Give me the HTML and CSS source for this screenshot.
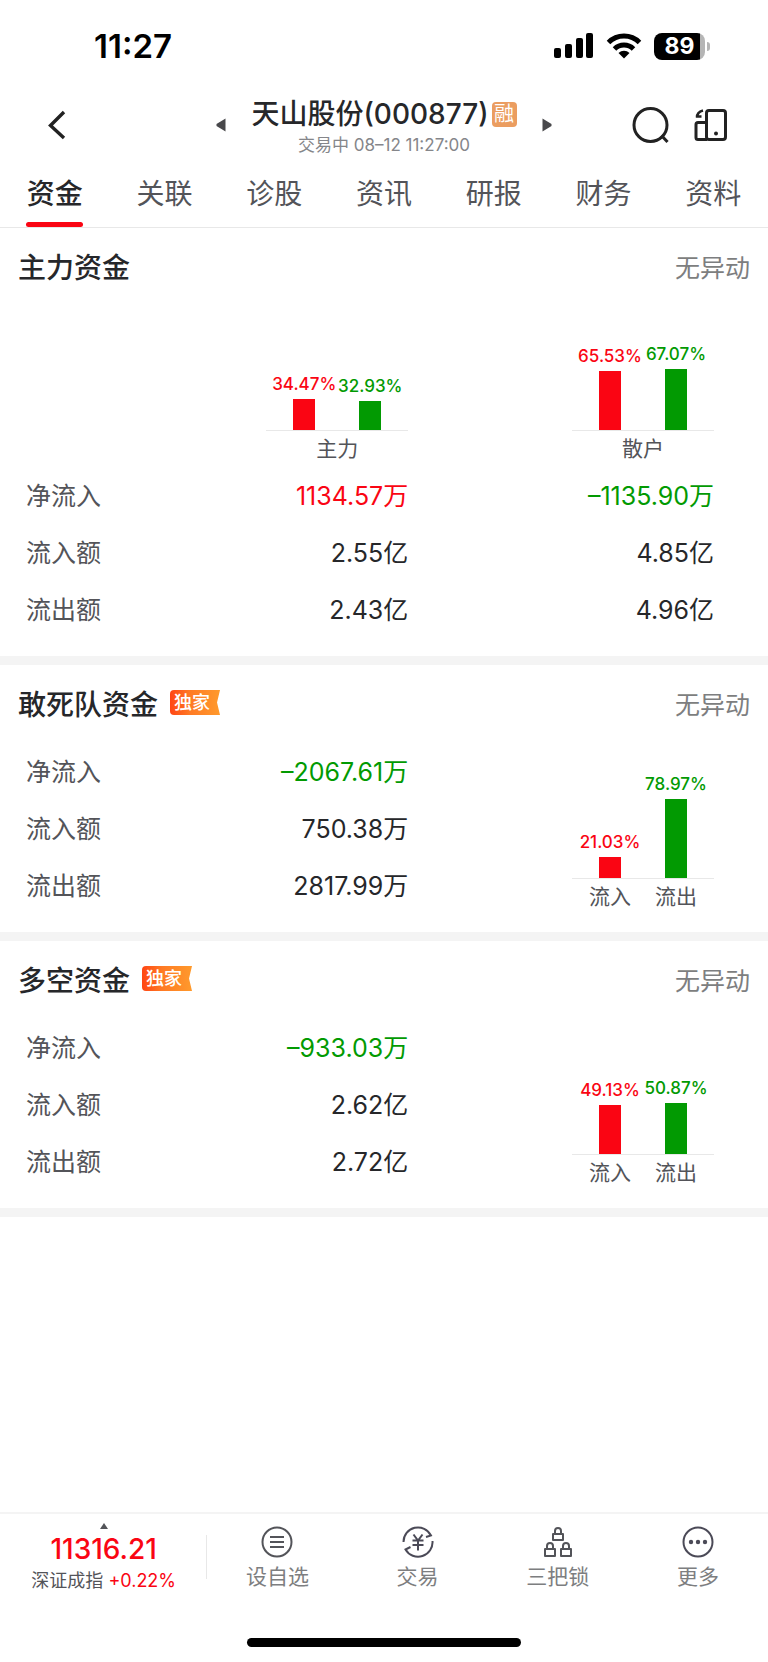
FILE: index.html
```html
<!DOCTYPE html>
<html lang="zh-CN">
<head>
    <meta charset="UTF-8">
    <meta name="viewport" content="width=device-width, initial-scale=1.0">
    <title>天山股份(000877)</title>
    <link rel="stylesheet" href="styles.css">
</head>

<body>
    <div class="status-bar">
        <span class="time">11:27</span>
        <div class="status-icons">
            <svg width="40" height="26" viewBox="0 0 40 26">
                <rect x="0" y="15" width="7" height="10" rx="2"/>
                <rect x="11" y="11" width="7" height="14" rx="2"/>
                <rect x="22" y="5" width="7" height="20" rx="2"/>
                <rect x="32" y="0" width="7" height="25" rx="2"/>
            </svg>
            <svg width="36" height="26" viewBox="0 0 36 26">
                <g fill="none" stroke="#000" stroke-width="5">
                    <path d="M2.5 9.5a22 22 0 0 1 31 0"/>
                    <path d="M8.5 16a13.5 13.5 0 0 1 19 0"/>
                </g>
                <path d="M18 25.5l-5.5-5.5a8 8 0 0 1 11 0z"/>
            </svg>
            <div class="battery">
                <span class="battery-level">89</span>
                <span class="battery-cap"></span>
            </div>
        </div>
    </div>

    <header class="header">
        <button class="icon-btn back" type="button" aria-label="返回">
            <svg width="20" height="32" viewBox="0 0 20 32" fill="none" stroke="#222" stroke-width="3.4">
                <path d="M18 3L4.500 16.500L18 29"/>
            </svg>
        </button>
        <div class="stock">
            <button class="icon-btn" type="button" aria-label="上一只">
                <svg width="10" height="14" viewBox="0 0 10 14" fill="#48484b">
                    <path d="M9.500 0.500v13L0.500 8V6z"/>
                </svg>
            </button>
            <div class="stock-info">
                <h1>天山股份(000877)<span class="margin-tag">融</span></h1>
                <p>交易中 08–12 11:27:00</p>
            </div>
            <button class="icon-btn" type="button" aria-label="下一只">
                <svg width="10" height="14" viewBox="0 0 10 14" fill="#48484b">
                    <path d="M0.500 0.500v13L9.500 8V6z"/>
                </svg>
            </button>
        </div>
        <div class="actions">
            <button class="icon-btn" type="button" aria-label="搜索">
                <svg width="38" height="38" viewBox="0 0 38 38" fill="none" stroke="#222" stroke-width="3">
                    <circle cx="18.500" cy="19" r="16.500"/>
                    <path d="M29.500 29.500l6 6.500"/>
                </svg>
            </button>
            <button class="icon-btn" type="button" aria-label="横屏">
                <svg width="34" height="36" viewBox="0 0 34 36" fill="none" stroke="#222" stroke-width="3">
                    <rect x="12.500" y="3.500" width="19" height="29" rx="2.500"/>
                    <path d="M12.500 15.500H4a2 2 0 0 0-2 2V30.500a2 2 0 0 0 2 2H13"/>
                    <path d="M3 10.500C3 6.500 5 4.500 9 3.500M2 9.500h5.500" stroke-width="2.600"/>
                    <circle cx="22" cy="26.500" r="2" fill="#222" stroke="none"/>
                </svg>
            </button>
        </div>
    </header>

    <nav class="tabs">
        <a class="tab active" href="#">资金</a>
        <a class="tab" href="#">关联</a>
        <a class="tab" href="#">诊股</a>
        <a class="tab" href="#">资讯</a>
        <a class="tab" href="#">研报</a>
        <a class="tab" href="#">财务</a>
        <a class="tab" href="#">资料</a>
    </nav>

    <main>
        <section class="card">
            <div class="card-head">
                <h2>主力资金</h2>
                <span class="note">无异动</span>
            </div>
            <div class="card-body">
                <table class="funds wide">
                    <thead>
                        <tr>
                            <td></td>
                            <th scope="col">
                                <div class="chart">
                                    <div class="bars">
                                        <div class="bar up">34.47%<i style="height: 31px"></i></div>
                                        <div class="bar down">32.93%<i style="height: 29px"></i></div>
                                    </div>
                                    <div class="chart-labels"><span>主力</span></div>
                                </div>
                            </th>
                            <th scope="col">
                                <div class="chart">
                                    <div class="bars">
                                        <div class="bar up">65.53%<i style="height: 59px"></i></div>
                                        <div class="bar down">67.07%<i style="height: 61px"></i></div>
                                    </div>
                                    <div class="chart-labels"><span>散户</span></div>
                                </div>
                            </th>
                        </tr>
                    </thead>
                    <tbody>
                        <tr>
                            <th scope="row">净流入</th>
                            <td class="up">1134.57万</td>
                            <td class="down">–1135.90万</td>
                        </tr>
                        <tr>
                            <th scope="row">流入额</th>
                            <td>2.55亿</td>
                            <td>4.85亿</td>
                        </tr>
                        <tr>
                            <th scope="row">流出额</th>
                            <td>2.43亿</td>
                            <td>4.96亿</td>
                        </tr>
                    </tbody>
                </table>
            </div>
        </section>

        <section class="card">
            <div class="card-head">
                <h2>敢死队资金</h2>
                <span class="exclusive">独家</span>
                <span class="note">无异动</span>
            </div>
            <div class="card-body split">
                <table class="funds">
                    <tr>
                        <th scope="row">净流入</th>
                        <td class="down">–2067.61万</td>
                    </tr>
                    <tr>
                        <th scope="row">流入额</th>
                        <td>750.38万</td>
                    </tr>
                    <tr>
                        <th scope="row">流出额</th>
                        <td>2817.99万</td>
                    </tr>
                </table>
                <div class="chart">
                    <div class="bars">
                        <div class="bar up">21.03%<i style="height: 21px"></i></div>
                        <div class="bar down">78.97%<i style="height: 79px"></i></div>
                    </div>
                    <div class="chart-labels"><span>流入</span><span>流出</span></div>
                </div>
            </div>
        </section>

        <section class="card">
            <div class="card-head">
                <h2>多空资金</h2>
                <span class="exclusive">独家</span>
                <span class="note">无异动</span>
            </div>
            <div class="card-body split">
                <table class="funds">
                    <tr>
                        <th scope="row">净流入</th>
                        <td class="down">–933.03万</td>
                    </tr>
                    <tr>
                        <th scope="row">流入额</th>
                        <td>2.62亿</td>
                    </tr>
                    <tr>
                        <th scope="row">流出额</th>
                        <td>2.72亿</td>
                    </tr>
                </table>
                <div class="chart">
                    <div class="bars">
                        <div class="bar up">49.13%<i style="height: 49px"></i></div>
                        <div class="bar down">50.87%<i style="height: 51px"></i></div>
                    </div>
                    <div class="chart-labels"><span>流入</span><span>流出</span></div>
                </div>
            </div>
        </section>
    </main>

    <footer class="bottom">
        <div class="toolbar">
            <a class="index" href="#">
                <svg width="8" height="6" viewBox="0 0 8 6" fill="#535459"><path d="M4 0l4 6H0z"/></svg>
                <strong>11316.21</strong>
                <span>深证成指 <em>+0.22%</em></span>
            </a>
            <button class="tool" type="button">
                <svg width="32" height="32" viewBox="0 0 32 32" fill="none" stroke="#535459" stroke-width="2">
                    <circle cx="16" cy="16" r="14.500"/>
                    <path d="M9 11h14M9 16h14M9 21h14"/>
                </svg>
                设自选
            </button>
            <button class="tool" type="button">
                <svg width="32" height="32" viewBox="0 0 32 32" fill="none" stroke="#4b4a57" stroke-width="2">
                    <path d="M1.500 16A14.500 14.500 0 0 1 29 9.500l-5 1.500"/>
                    <path d="M30.500 15A14.500 14.500 0 0 1 3.500 23.500l5-2.500"/>
                    <path d="M11.500 8.500l4.500 6l4.500-6M16 14.500V24.500M10.500 14.500h11M10.500 19h11"/>
                </svg>
                交易
            </button>
            <button class="tool" type="button">
                <svg width="32" height="32" viewBox="0 0 32 32" fill="none" stroke="#535459" stroke-width="2" stroke-linejoin="round">
                    <path d="M11 8h10v6H11zM13 8V5a3 3 0 0 1 6 0v3"/>
                    <path d="M3 23h10v7H3zM5 23V20a3 3 0 0 1 6 0v3"/>
                    <path d="M19 23h10v7H19zM21 23V20a3 3 0 0 1 6 0v3"/>
                </svg>
                三把锁
            </button>
            <button class="tool" type="button">
                <svg width="32" height="32" viewBox="0 0 32 32" fill="none" stroke="#4b4a57" stroke-width="2">
                    <circle cx="16" cy="16" r="14.500"/>
                    <g fill="#4b4a57" stroke="none">
                        <circle cx="9" cy="16" r="2.200"/>
                        <circle cx="16" cy="16" r="2.200"/>
                        <circle cx="23" cy="16" r="2.200"/>
                    </g>
                </svg>
                更多
            </button>
        </div>
        <div class="home-indicator"></div>
    </footer>
</body>
</html>
```
FILE: styles.css
```css
* {
    box-sizing: border-box;
}

body {
    margin: 0;
    min-height: 100vh;
    display: flex;
    flex-direction: column;
    background-color: #fff;
    color: #26272a;
    font-family: Inter, "Noto Sans CJK SC", sans-serif;
    font-size: 24px;
}

h1, h2, p {
    margin: 0;
    font-weight: 500;
}

a {
    color: inherit;
    text-decoration: none;
}

button {
    border: none;
    padding: 0;
    background: none;
    font: inherit;
    color: inherit;
    cursor: pointer;
}

svg {
    display: block;
}

.up {
    color: #fa0513;
}

.down {
    color: #029a02;
}

/* status bar */
.status-bar {
    display: flex;
    justify-content: space-between;
    align-items: center;
    height: 92px;
    padding: 0 58px 0 94px;
}

.time {
    font-size: 33px;
    font-weight: 600;
    color: #000;
}

.status-icons {
    display: flex;
    align-items: center;
    gap: 12px;
}

.battery {
    display: flex;
    align-items: center;
    gap: 2px;
}

.battery-level {
    width: 51px;
    height: 27px;
    border-radius: 8px;
    background: linear-gradient(to right, #000 46px, #b5b5b5 46px);
    color: #fff;
    font-size: 23px;
    font-weight: 700;
    line-height: 27px;
    text-align: center;
}

.battery-cap {
    width: 3px;
    height: 9px;
    border-radius: 0 4px 4px 0;
    background-color: #b5b5b5;
}

/* header */
.header {
    display: grid;
    grid-template-columns: 1fr auto 1fr;
    align-items: center;
    height: 62px;
    padding: 0 40px;
}

.back {
    justify-self: start;
    padding-left: 6px;
}

.stock {
    display: flex;
    align-items: center;
    gap: 25px;
}

.stock-info {
    padding-top: 4px;
    text-align: center;
}

.stock-info h1 {
    display: flex;
    align-items: center;
    gap: 3px;
    font-size: 28px;
    line-height: 36px;
}

.stock-info p {
    font-size: 17px;
    font-weight: 400;
    line-height: 26px;
    color: #85868a;
}

.margin-tag {
    width: 25px;
    height: 25px;
    border-radius: 4px;
    background-color: #eb9d60;
    color: #fff;
    font-size: 20px;
    font-weight: 400;
    line-height: 25px;
    text-align: center;
}

.actions {
    display: flex;
    justify-content: flex-end;
    align-items: center;
    gap: 24px;
}

/* tabs */
.tabs {
    display: flex;
    height: 74px;
    border-bottom: 1px solid #e8e8e8;
}

.tab {
    flex: 1;
    display: flex;
    flex-direction: column;
    align-items: center;
    justify-content: flex-end;
    font-size: 28px;
    line-height: 56px;
    color: #535459;
}

.tab::after {
    content: "";
    width: 57px;
    height: 5px;
    border-radius: 3px;
}

.tab.active {
    color: #26272a;
    font-weight: 500;
}

.tab.active::after {
    background-color: #fa0513;
}

/* cards */
.card {
    border-bottom: 9px solid #f4f4f4;
    padding-bottom: 18px;
}

.card-head {
    display: flex;
    align-items: center;
    height: 78px;
    padding: 0 18px 3px;
    gap: 12px;
}

.card-head h2 {
    font-size: 28px;
}

.note {
    margin-left: auto;
    font-size: 25px;
    color: #7d7e80;
}

.exclusive {
    width: 50px;
    height: 25px;
    padding-left: 4px;
    border-radius: 4px 0 0 4px;
    background: linear-gradient(to right, #ff4514, #ff7a24 40%, #ff9a2c);
    clip-path: polygon(0 0, 100% 0, 94% 50%, 100% 100%, 0 100%);
    color: #fff;
    font-size: 18px;
    font-weight: 500;
    line-height: 25px;
}

.card-body {
    padding: 0 54px 0 26px;
}

.split {
    display: grid;
    grid-template-columns: 5fr 4fr;
    justify-items: end;
    align-items: end;
}

/* data tables */
.funds {
    width: 100%;
    table-layout: fixed;
    border-collapse: collapse;
}

.funds th,
.funds td {
    height: 57px;
    padding: 0;
    font-size: 25px;
    font-weight: 400;
    line-height: 36px;
    text-align: right;
}

.funds tbody th {
    width: 36%;
    text-align: left;
    color: #535459;
}

.wide thead th,
.wide thead td {
    height: 161px;
    width: calc(400% / 9);
    vertical-align: bottom;
}

.wide thead td:first-child {
    width: 20%;
}

.wide thead th:nth-child(2) {
    width: auto;
}

/* bar charts */
.chart {
    width: 142px;
    margin-left: auto;
}

.wide .chart {
    padding-bottom: 1px;
}

.bars,
.chart-labels {
    display: flex;
    justify-content: center;
}

.bars {
    align-items: flex-end;
    border-bottom: 1px solid #e8e8e8;
}

.bar {
    width: 66px;
    display: flex;
    flex-direction: column;
    align-items: center;
    gap: 4px;
    font-size: 17px;
    font-weight: 500;
    line-height: 22px;
}

.bar i {
    width: 22px;
    background-color: currentColor;
}

.chart-labels span {
    width: 66px;
    font-size: 21px;
    line-height: 35px;
    text-align: center;
    color: #535459;
}

/* bottom bar */
.bottom {
    margin-top: auto;
}

.toolbar {
    display: flex;
    height: 85px;
    border-top: 2px solid #f4f4f4;
}

.index {
    width: 27%;
    display: flex;
    flex-direction: column;
    align-items: center;
    padding-top: 9px;
    font-size: 18px;
    line-height: 24px;
    color: #535459;
    background: linear-gradient(#e8e8e8, #e8e8e8) right 21px / 1px 44px no-repeat;
}

.index strong {
    font-size: 28px;
    font-weight: 500;
    line-height: 40px;
    color: #fa0513;
}

.index em {
    font-style: normal;
    color: #fa0513;
}

.tool {
    flex: 1;
    display: flex;
    flex-direction: column;
    align-items: center;
    padding-top: 12px;
    gap: 4px;
    font-size: 21px;
    line-height: 30px;
    color: #7d7e80;
}

.home-indicator {
    width: 274px;
    height: 9px;
    margin: 41px auto 15px;
    border-radius: 5px;
    background-color: #000;
}
```
